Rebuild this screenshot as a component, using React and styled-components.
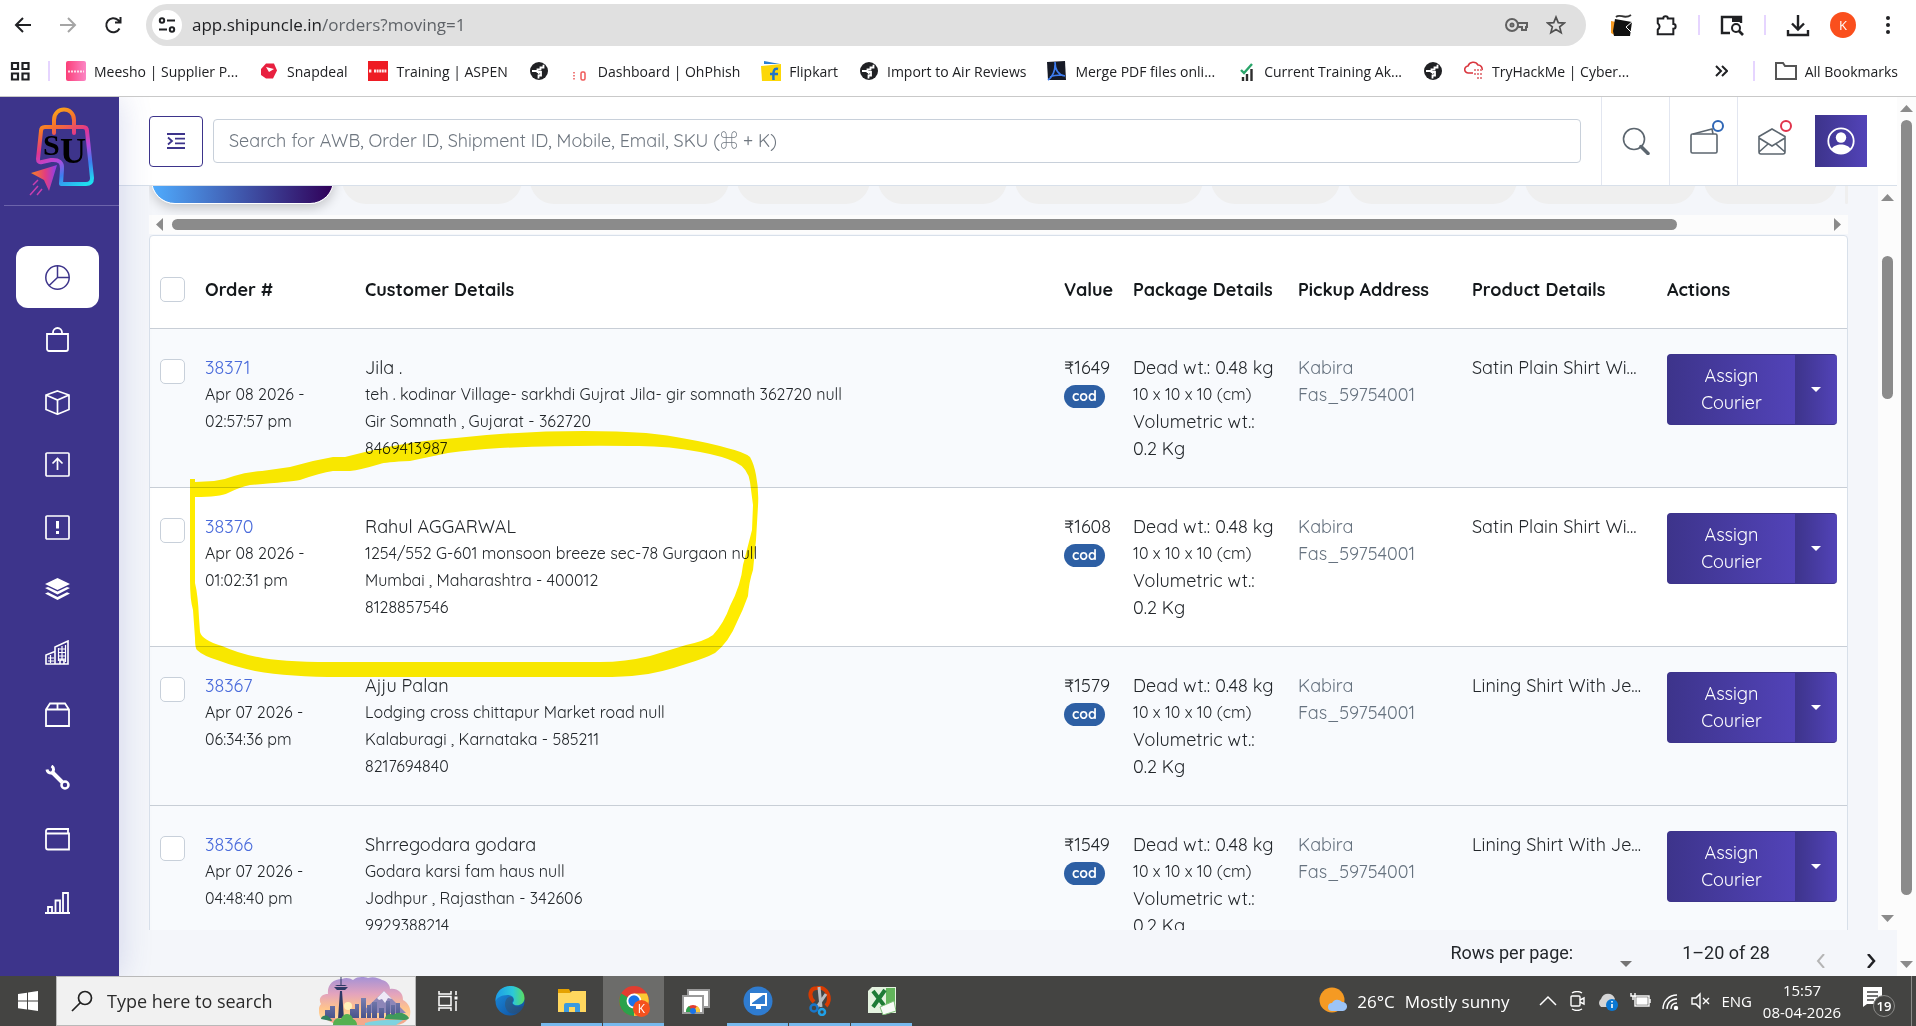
import React from "react";
import styled, { createGlobalStyle, css } from "styled-components";

const color = {
  brand: "#3d348b",
  brandLight: "#5243b8",
  line: "#d8e0ea",
  rowLine: "#c8ced6",
  page: "#f4f6fa",
  stripe: "#f8fafd",
  text: "#23272b",
  muted: "#66727f",
  thumb: "#8b8b8b",
};

const appFont = `Quicksand, Lato, "Noto Sans CJK JP", sans-serif`;
const systemFont = `"Segoe UI", "Open Sans", "Noto Sans", sans-serif`;

const GlobalStyle = createGlobalStyle`
  * { box-sizing: border-box; }
  body { margin: 0; overflow: hidden; font-family: ${appFont}; color: ${color.text}; }
  button, input, select { font: inherit; color: inherit; margin: 0; }
  button { padding: 0; border: 0; background: none; }
  a { color: inherit; text-decoration: none; }
  svg { display: block; flex: none; }
`;

const Screen = styled.div`
  position: relative;
  display: flex;
  flex-direction: column;
  height: 100vh;
  background: #fff;
`;

/* ---------- browser chrome ---------- */

const Chrome = styled.header`
  flex: none;
  border-bottom: 1px solid #c9c9c9;
  font-family: ${systemFont};
  color: #202124;
`;

const AddressRow = styled.div`
  display: flex;
  align-items: center;
  height: 50px;
  padding: 0 16px 0 11px;
`;

const NavGroup = styled.nav`
  display: flex;
  gap: 21px;
  width: 135px;
`;

const IconButton = styled.button`
  display: flex;
  align-items: center;
  justify-content: center;
  width: 24px;
  height: 24px;
`;

const AddressPill = styled.div`
  flex: 1;
  display: flex;
  align-items: center;
  height: 42px;
  padding: 0 18px 0 6px;
  border-radius: 21px;
  background: #e0e0e0;
`;

const SiteInfo = styled.button`
  display: flex;
  align-items: center;
  justify-content: center;
  width: 30px;
  height: 30px;
  border-radius: 50%;
  background: #fff;
`;

const UrlText = styled.div`
  flex: 1;
  padding-left: 10px;
  font-size: 17px;
  line-height: 24px;
  color: #5f6368;
  span { color: #202124; }
`;

const PillTools = styled.div`
  display: flex;
  gap: 16px;
`;

const ToolbarTools = styled.div`
  display: flex;
  align-items: center;
  gap: 20px;
  padding-left: 24px;
`;

const Divider = styled.span`
  width: 2px;
  height: 20px;
  background: #e6d5ff;
`;

const Profile = styled.button`
  width: 26px;
  height: 26px;
  border-radius: 50%;
  background: #fa4f1d;
  color: #fff;
  font-size: 13px;
`;

const BookmarkRow = styled.nav`
  display: flex;
  align-items: center;
  gap: 16px;
  height: 46px;
  padding: 0 18px 4px 8px;
  font-size: 14px;
`;

const BookmarkList = styled.div`
  flex: 1;
  display: flex;
  align-items: center;
  gap: 21px;
`;

const Bookmark = styled.a`
  display: flex;
  align-items: center;
  gap: 8px;
  white-space: nowrap;
`;

const BookmarkEnd = styled.div`
  display: flex;
  align-items: center;
  gap: 20px;
`;

/* ---------- application shell ---------- */

const Shell = styled.div`
  flex: 1;
  min-height: 0;
  display: flex;
`;

const Sidebar = styled.aside`
  position: relative;
  z-index: 1;
  flex: none;
  display: flex;
  flex-direction: column;
  width: 119px;
  background: ${color.brand};
  box-shadow: 0 0 32px rgba(61, 72, 170, 0.2);
  clip-path: inset(0 -40px 0 0);
`;

const Brand = styled.a`
  display: flex;
  justify-content: center;
  height: 109px;
  padding-top: 8px;
  margin-left: 4px;
  border-bottom: 1px solid #6c64ab;
`;

const SideNav = styled.nav`
  flex: 1;
  display: flex;
  flex-direction: column;
  justify-content: space-between;
  padding: 40px 20px 43px 16px;
`;

const SideLink = styled.a`
  display: flex;
  align-items: center;
  justify-content: center;
  height: 62px;
  border-radius: 12px;
  color: #fff;
  ${(p) => p.$active && css`background: #fff; color: ${color.brand};`}
`;

const Main = styled.main`
  flex: 1;
  min-width: 0;
  display: flex;
  flex-direction: column;
  background: ${color.page};
`;

const TopBar = styled.div`
  flex: none;
  display: flex;
  align-items: center;
  height: 89px;
  padding-left: 30px;
  border-bottom: 1px solid ${color.line};
  background: #fff;
`;

const MenuToggle = styled.button`
  display: flex;
  align-items: center;
  justify-content: center;
  width: 54px;
  height: 51px;
  border: 1px solid ${color.brand};
  border-radius: 4px;
  color: ${color.brand};
`;

const SearchInput = styled.input`
  flex: 1;
  height: 44px;
  margin: 0 20px 0 10px;
  padding: 0 15px 2px;
  border: 1px solid #c8d0da;
  border-radius: 4px;
  background: #fff;
  font-size: 18px;
  &::placeholder { color: #6f7780; opacity: 1; }
`;

const TopAction = styled.button`
  position: relative;
  display: flex;
  align-items: center;
  justify-content: center;
  width: 68px;
  height: 88px;
  border-left: 1px solid #e2e6f0;
  color: #5c666f;
`;

const Ring = styled.span`
  position: absolute;
  top: 23px;
  right: 13px;
  width: 12px;
  height: 12px;
  border: 2px solid ${(p) => p.$tone};
  border-radius: 50%;
`;

const AccountArea = styled.div`
  padding: 0 30px 0 10px;
`;

const Account = styled.button`
  display: flex;
  align-items: center;
  justify-content: center;
  width: 52px;
  height: 52px;
  background: linear-gradient(90deg, ${color.brand}, ${color.brandLight});
`;

const Scroller = styled.div`
  flex: 1;
  min-height: 0;
  display: flex;
`;

const Content = styled.div`
  flex: 1;
  min-width: 0;
  overflow: hidden;
  padding: 0 30px;
`;

const Tabs = styled.div`
  display: flex;
  align-items: flex-end;
  gap: 8px;
  height: 29px;
  padding: 0 0 11px 2px;
  overflow: hidden;
`;

const Tab = styled.button`
  flex: ${(p) => p.$span} ${(p) => p.$span} 0;
  height: 54px;
  border-radius: 24px;
  background: #efefef;
  ${(p) =>
    p.$active &&
    css`
      border: 1px solid #fff;
      background: linear-gradient(90deg, #4facfe, #300058);
      box-shadow: 0 4px 12px rgba(0, 0, 0, 0.2);
    `}
`;

const HTrack = styled.div`
  display: flex;
  align-items: center;
  height: 19px;
  padding: 0 7px;
  background: #fcfcfc;
`;

const HSpace = styled.div`
  flex: 1;
  padding: 0 157px 0 9px;
`;

const HThumb = styled.div`
  height: 11px;
  border-radius: 6px;
  background: ${color.thumb};
`;

const VTrack = styled.div`
  flex: none;
  display: flex;
  flex-direction: column;
  align-items: center;
  width: 19px;
  padding: 8px 0;
  background: #fcfcfc;
`;

const VSpace = styled.div`
  flex: 1;
  padding: ${(p) => p.$before}px 0 ${(p) => p.$after}px;
`;

const VThumb = styled.div`
  width: 11px;
  height: 100%;
  border-radius: 6px;
  background: ${color.thumb};
`;

/* ---------- orders table ---------- */

const Card = styled.div`
  margin-top: 1px;
  border: 1px solid ${color.line};
  border-radius: 4px;
  background: #fff;
`;

const Table = styled.table`
  width: 100%;
  table-layout: fixed;
  border-collapse: collapse;
  font-size: 18px;
  line-height: 27px;
`;

const Col = styled.col`
  width: ${(p) => (p.$w ? `${p.$w}px` : "auto")};
`;

const Th = styled.th`
  height: 92px;
  padding: 16px 10px 0;
  border-bottom: 1px solid ${color.rowLine};
  text-align: left;
  font-weight: 700;
  white-space: nowrap;
  color: #14181b;
`;

const Tr = styled.tr`
  background: ${(p) => (p.$striped ? color.stripe : "#fff")};
`;

const Td = styled.td`
  height: 159px;
  padding: 25px 10px;
  border-bottom: 1px solid ${color.rowLine};
  vertical-align: top;
  white-space: nowrap;
  ${(p) => p.$muted && css`color: ${color.muted};`}
`;

const Line = styled.div`
  height: 27px;
  font-size: ${(p) => (p.$small ? 16 : 18)}px;
`;

const Clip = styled.div`
  overflow: hidden;
  text-overflow: ellipsis;
`;

const OrderLink = styled.a`
  color: #4a6bdb;
`;

const Check = styled.input`
  appearance: none;
  display: block;
  width: 25px;
  height: 25px;
  border: 1px solid #c8d0da;
  border-radius: 5px;
  background: #fff;
`;

const CheckCell = styled(Td)`
  padding-top: 30px;
`;

const Pill = styled.span`
  display: inline-block;
  padding: 0 8px;
  border-radius: 12px;
  background: #2d5fa4;
  color: #fff;
  font-size: 14px;
  font-weight: 700;
  line-height: 23px;
`;

const Split = styled.div`
  display: flex;
  height: 71px;
  color: #fff;
`;

const SplitButton = styled.button`
  flex: 1;
  white-space: normal;
  padding: 0 16px;
  border: 1px solid ${color.brand};
  border-right: 0;
  border-radius: 4px 0 0 4px;
  background: linear-gradient(90deg, ${color.brand}, ${color.brandLight});
`;

const SplitMenu = styled(SplitButton)`
  flex: none;
  display: flex;
  align-items: center;
  justify-content: center;
  width: 42px;
  padding: 0;
  border-left: 0;
  border-radius: 0 4px 4px 0;
`;

const Pager = styled.div`
  flex: none;
  display: flex;
  align-items: center;
  justify-content: flex-end;
  height: 46px;
  padding: 0 14px 2px;
  font-family: Roboto, sans-serif;
  font-size: 18px;
`;

const RowsLabel = styled.label`
  display: flex;
  align-items: center;
  gap: 8px;
  margin-right: 44px;
`;

const RowsSelect = styled.select`
  appearance: none;
  width: 39px;
  height: 30px;
  border: 0;
  outline: 0;
  background: transparent;
`;

const SelectBox = styled.span`
  display: flex;
  align-items: flex-end;
  width: 57px;
  height: 30px;
`;

const PageButtons = styled.div`
  display: flex;
  align-items: flex-end;
  gap: 26px;
  height: 42px;
  margin-left: 39px;
`;

/* ---------- taskbar ---------- */

const Taskbar = styled.footer`
  flex: none;
  display: flex;
  height: 50px;
  background: #444442;
  color: #fff;
  font-family: ${systemFont};
`;

const TaskButton = styled.button`
  display: flex;
  align-items: center;
  justify-content: center;
  width: ${(p) => p.$w || 62}px;
  height: 50px;
`;

const TaskApp = styled(TaskButton)`
  width: 61px;
  border-bottom: 3px solid ${(p) => (p.$open ? "#76b9ed" : "transparent")};
  border-top: 3px solid transparent;
  ${(p) => p.$active && css`background: #6c6c6a; border-top-color: #6c6c6a;`}
`;

const TaskApps = styled.div`
  display: flex;
  gap: 1px;
`;

const TaskSearch = styled.label`
  display: flex;
  align-items: center;
  width: 360px;
  padding: 0 4px 0 14px;
  border: 1px solid #b9b9b9;
  background: #f1f1f1;
  input {
    flex: 1;
    min-width: 0;
    margin-left: 14px;
    padding: 0;
    border: 0;
    background: none;
    font-size: 18px;
  }
  input::placeholder { color: #2b2b2b; opacity: 1; }
`;

const Tray = styled.div`
  display: flex;
  align-items: center;
  margin-left: auto;
  padding-right: 4px;
`;

const Weather = styled.button`
  display: flex;
  align-items: center;
  gap: 10px;
  margin-right: 30px;
  font-size: 17px;
`;

const TrayIcons = styled.div`
  display: flex;
  align-items: center;
  gap: 10px;
  font-size: 15px;
`;

const Clock = styled.time`
  width: 92px;
  margin: 0 14px 0 4px;
  text-align: center;
  font-size: 15px;
  line-height: 22px;
`;

const Notice = styled.button`
  display: flex;
  align-items: center;
  width: 50px;
  height: 50px;
  border-right: 1px solid #8a8a88;
`;

/* freehand highlighter drawn over the page */
const Marker = styled.svg`
  position: absolute;
  left: 190px;
  top: 430px;
  z-index: 2;
  mix-blend-mode: multiply;
  pointer-events: none;
`;

/* ---------- drawings ---------- */

const Ico = ({ s = 24, vb = 24, w = 2, children }) => (
  <svg width={s} height={s} viewBox={`0 0 ${vb} ${vb}`} fill="none" stroke="currentColor" strokeWidth={w} aria-hidden="true">
    {children}
  </svg>
);

const Globe = () => (
  <Ico s={20} vb={20} w={2}>
    <circle cx="10" cy="10" r="9" fill="#202124" stroke="none" />
    <path d="M3 10h4.500c2 0 1.500 2.500 3 2.500M9.500 17.500v-3h2.500v-3.500H8.500V8.500h3V6.500h3V3.800" stroke="#fff" strokeWidth="1.800" />
  </Ico>
);

const favicons = {
  meesho: (
    <Ico s={20} vb={20}>
      <defs><linearGradient id="me"><stop stopColor="#fb3f78" /><stop offset="1" stopColor="#fb86c5" /></linearGradient></defs>
      <rect width="20" height="20" rx="2" fill="url(#me)" stroke="none" />
      <path d="M2 10.500h16" stroke="#fff" strokeWidth="2" strokeDasharray="2 1" opacity=".8" />
    </Ico>
  ),
  snapdeal: (
    <Ico s={20} vb={20}>
      <path d="M7 2.500h8l3 7-4 8H7L2 14V8z" fill="#e8203f" stroke="none" />
      <path d="M7 6l3 5 5-3-4-1z" fill="#fff" stroke="none" />
    </Ico>
  ),
  aspen: (
    <Ico s={20} vb={20}>
      <rect width="20" height="20" fill="#ee1c24" stroke="none" />
      <path d="M1 10h3M6 10h13" stroke="#fff" strokeWidth="3" strokeDasharray="2 .600" opacity=".9" />
    </Ico>
  ),
  phish: (
    <Ico s={20} vb={20}>
      <path d="M4 11v8" stroke="#f08080" strokeDasharray="1.500 1.500" />
      <rect x="11" y="11" width="4" height="8" rx="1.500" stroke="#f05a5a" strokeWidth="1.500" />
    </Ico>
  ),
  flipkart: (
    <Ico s={20} vb={20}>
      <path d="M3 0l16 3H3z" fill="#2a7fd4" stroke="none" />
      <path d="M0 5l20-2v17H1z" fill="#fcd708" stroke="none" />
      <path d="M17 8c-4-1-5 1-4.500 11M9 13h8" stroke="#1f74c8" strokeWidth="2.500" />
    </Ico>
  ),
  pdf: (
    <Ico s={20} vb={20}>
      <path d="M0 1l18-1 1 19H1z" fill="#161a26" stroke="none" />
      <path d="M8 1c0 9 4 13 10 14M8 4c0 8-3 12-7 15M3 16c4-2 8-2 12-2" stroke="#3f7df0" strokeWidth="1.600" />
    </Ico>
  ),
  check: (
    <Ico s={20} vb={20}>
      <path d="M7 20v-4M11 20v-7M15.500 20V8" stroke="#2d2d2d" strokeWidth="2.400" />
      <path d="M5 9l3 3 8-9" stroke="#2aa56a" strokeWidth="2.400" />
    </Ico>
  ),
  thm: (
    <Ico s={20} vb={20}>
      <path d="M9 12H4.500a3.500 3.500 0 01-.5-7 5.500 5.500 0 0110-1 4 4 0 014 5" stroke="#d9363e" strokeWidth="1.600" />
      <path d="M10 9h9M10 13h9M13 17h6" stroke="#e5868b" strokeDasharray="2 1" />
    </Ico>
  ),
};

const bookmarks = [
  { icon: favicons.meesho, text: "Meesho | Supplier P..." },
  { icon: favicons.snapdeal, text: "Snapdeal" },
  { icon: favicons.aspen, text: "Training | ASPEN" },
  { icon: <Globe />, name: "Untitled page" },
  { icon: favicons.phish, text: "Dashboard | OhPhish" },
  { icon: favicons.flipkart, text: "Flipkart" },
  { icon: <Globe />, text: "Import to Air Reviews" },
  { icon: favicons.pdf, text: "Merge PDF files onli..." },
  { icon: favicons.check, text: "Current Training Ak..." },
  { icon: <Globe />, name: "Untitled page" },
  { icon: favicons.thm, text: "TryHackMe | Cyber..." },
];

const side = (label, body, active) => ({ label, body, active });

const sideItems = [
  side("Dashboard", <Ico s={25} vb={25} w={1.5}><circle cx="12.500" cy="12.500" r="11.700" /><path d="M12.500 1v11.500H24M12.500 12.500l-8.300 8" /></Ico>, true),
  side("Orders", <Ico s={25} vb={25} w={1.8}><path d="M2 7h21v15a2 2 0 01-2 2H4a2 2 0 01-2-2zM8 7V5.500a4.500 4.500 0 019 0V7" /></Ico>),
  side("Shipments", <Ico s={25} vb={25} w={1.7}><path d="M12.500 1L24 5v14.500l-11.500 4.700L1 19.500V5zM1 5l11.500 5L24 5M12.500 10v14" /></Ico>),
  side("Upload", <Ico s={25} vb={25} w={1.7}><rect x="1" y="1" width="23" height="23" rx="1" /><path d="M12.500 18V7M7.500 11.500l5-5 5 5" /></Ico>),
  side("Exceptions", <Ico s={25} vb={25} w={1.7}><rect x="1" y="1" width="23" height="23" rx="1" /><path d="M12.500 6v7.500M12.500 16v3" strokeWidth="3" /></Ico>),
  side("Channels", <Ico s={25} vb={25} w={1}><path d="M12.500 1L25 7l-12.500 6L0 7zM0 11l3-1 9.500 4.500L22 10l3 1-12.500 6.500zM0 16.500l3-1.200 9.500 4.700 9.500-4.700 3 1.200-12.500 6.500z" fill="currentColor" stroke="none" /></Ico>),
  side("Warehouses", <Ico s={25} vb={25} w={1.6}><path d="M1 24V15l9-3.500V7l13-6v23zM10 11v13" /><path d="M13 9h8M13 12.500h8M13 16h8M13 19h8M3 18h6M3 21h6M13.500 8v13M17 6v14M20.500 5v17M5.500 15v8" strokeWidth="1.200" /><path d="M15 24v-4h4v4" /></Ico>),
  side("Products", <Ico s={25} vb={25} w={1.8}><path d="M1 7.500L5 1.500h15l4 6V24H1zM1 7.500h23M12.500 1.500v6" /></Ico>),
  side("Tools", <Ico s={25} vb={25} w={4}><path d="M7 7l10 10" /><circle cx="20" cy="20" r="3.500" strokeWidth="2.500" /><path d="M2 4.500a4 4 0 004.500 3.500A4 4 0 006.500 1" strokeWidth="3" /></Ico>),
  side("Wallet", <Ico s={25} vb={25} w={1.8}><path d="M24 2H3a2 2 0 00-2 2v16.500a2 2 0 002 2h21V6.500H1M23 2v4" /></Ico>),
  side("Reports", <Ico s={25} vb={25} w={1.8}><path d="M0 23h25M3 23v-6h4v6M10.500 23V10.500h4.500V23M18 23V3h5v20" /></Ico>),
];

const Logo = () => (
  <svg width="66" height="92" viewBox="0 0 66 92" aria-label="SU">
    <defs>
      <linearGradient id="bag" gradientUnits="userSpaceOnUse" x1="14" y1="6" x2="52" y2="82">
        <stop stopColor="#fbb315" /><stop offset=".22" stopColor="#f6722c" /><stop offset=".42" stopColor="#e0358f" /><stop offset=".6" stopColor="#b548dc" /><stop offset=".78" stopColor="#3d7df0" /><stop offset="1" stopColor="#1ee0f0" />
      </linearGradient>
      <linearGradient id="dart"><stop stopColor="#f58220" /><stop offset=".55" stopColor="#e23d80" /><stop offset="1" stopColor="#8b3df0" /></linearGradient>
    </defs>
    <g fill="none" stroke="url(#bag)" strokeWidth="4" strokeLinejoin="round" strokeLinecap="round">
      <path d="M25 28V15c0-14 20-14 20 0v13" />
      <path d="M32 79h25q6 0 6-6L58 26q0-4-4-4H16q-4 0-4 4L9 54q0 4 4 3l9-2q12-1 11 9z" />
    </g>
    <path d="M2 68l26-8-8 26-5-11z" fill="url(#dart)" />
    <path d="M1 90l8-9M8 90l5-6M4 80l5-5" stroke="#c93fb0" strokeWidth="1.500" />
    <text x="14" y="50" fontFamily="Liberation Serif, serif" fontWeight="700" fontSize="30">S</text>
    <text x="31" y="58" fontFamily="Liberation Serif, serif" fontWeight="700" fontSize="36">U</text>
  </svg>
);

const Tri = ({ dir }) => {
  const d = { up: "M0 7l6.500-7L13 7z", down: "M0 0h13L6.500 7z", left: "M7 0v13L0 6.500z", right: "M0 0v13l7-6.500z" }[dir];
  const tall = dir === "left" || dir === "right";
  return <svg width={tall ? 7 : 13} height={tall ? 13 : 7} fill={color.thumb}><path d={d} /></svg>;
};

const Skyline = () => (
  <svg width="92" height="48" viewBox="0 0 92 48">
    <defs>
      <linearGradient id="sky" x2="0" y2="1"><stop stopColor="#a592d6" /><stop offset=".4" stopColor="#e3a3bd" /><stop offset=".75" stopColor="#ffc48c" /><stop offset="1" stopColor="#ffd9a0" /></linearGradient>
      <linearGradient id="tower" x2="0" y2="1"><stop stopColor="#7a7fb0" /><stop offset="1" stopColor="#46518a" /></linearGradient>
    </defs>
    <path d="M2 42C-1 36-1 30 2 27-1 22 2 17 9 17 8 8 14 2 23 2c4-2 8-1 11 1C39-1 45 0 49 1c5-2 11 0 14 2 5 1 8 5 8 9 7-1 13 3 13 11 7 4 9 11 6 19z" fill="url(#sky)" />
    <circle cx="29" cy="29" r="4" fill="#fff0b8" />
    <path d="M42 36l23-22 22 22z" fill="#8d86b8" />
    <path d="M58 21l7-7 8 8-4-1-3 5-3-4-3 1z" fill="#efeaf7" />
    <path d="M6 33h5v-4h5v13H6zM31 32h5v10h-5zM36 27h4v15h-4zM42 21h5v21h-5zM48 28h4v14h-4zM53 25h5v17h-5zM60 31h5v11h-5zM67 24h4v18h-4zM72 28h4v14h-4zM77 26h4v12h-4z" fill="url(#tower)" />
    <path d="M21 14h2l2 28h-6zM15 10h14l-3 3h-8zM18 8h8l2 1H16z" fill="#2f3a66" />
    <path d="M22 0v9" stroke="#2f3a66" />
    <path d="M4 41h85q-3 7-13 7H18z" fill="#f3a98c" />
    <path d="M46 46q16-4 38-3l-7 5H46z" fill="#7fd3e0" />
    <path d="M66 42c0-5 6-6 8-4 5-4 13-2 16 3-1 2-4 2-6 2z" fill="#3f9a5a" />
    <path d="M14 48c0-6 5-8 8-6 3-8 11-5 12 0 3 1 4 4 4 6z" fill="#55b050" />
    <path d="M2 42c0-3 5-5 8-2s4 4 2 4z" fill="#2f8060" />
  </svg>
);

const ChromeMark = ({ s = 28, badge }) => (
  <svg width={s} height={s} viewBox="0 0 30 30">
    <circle cx="15" cy="15" r="14" fill="#e23d30" />
    <path d="M15 15L3 8a14 14 0 0012 21z" fill="#2ba24c" /><path d="M15 15v14a14 14 0 0012-21H15z" fill="#fcc934" />
    <circle cx="15" cy="15" r="7" fill="#fff" /><circle cx="15" cy="15" r="5.300" fill="#1a73e8" />
    {badge && <><circle cx="22" cy="22" r="8" fill="#f4511e" /><text x="22" y="26" fontSize="11" textAnchor="middle" fill="#fff">K</text></>}
  </svg>
);

const apps = [
  { name: "Edge", icon: (
    <svg width="30" height="30" viewBox="0 0 30 30">
      <defs>
        <linearGradient id="ed"><stop stopColor="#1c9be8" /><stop offset=".6" stopColor="#2cc8d8" /><stop offset="1" stopColor="#5ade62" /></linearGradient>
        <linearGradient id="ed2" x2="1" y2="1"><stop stopColor="#1b8fe0" /><stop offset="1" stopColor="#0f4b9a" /></linearGradient>
      </defs>
      <circle cx="15" cy="15" r="14.500" fill="url(#ed2)" />
      <path d="M.5 15C.5-5 29.500-4 29.500 12c0 8-10 9-12 5 3-3 1-8-5-8C6 9 2 12 .5 15z" fill="url(#ed)" />
      <path d="M30 19c-4 3-13 2-13-3 3-3 0-6-3-5-5 2-6 12 1 16 5 2 12 0 15-8z" fill="#444442" opacity=".35" />
    </svg>) },
  { name: "File Explorer", open: true, icon: (
    <svg width="30" height="28" viewBox="0 0 30 28"><path d="M1 2h11l2 4H1z" fill="#e5a100" /><path d="M1 6h12l2-2h14v21H1z" fill="#ffd75e" /><path d="M7 25v-7q0-2 2-2h12q2 0 2 2v7h-5v-5h-6v5z" fill="#3a9ae0" /></svg>) },
  { name: "Chrome", open: true, active: true, icon: <ChromeMark s={32} badge /> },
  { name: "Remote Desktop", icon: (
    <svg width="28" height="28" viewBox="0 0 28 28"><rect x="6" y="3" width="21" height="17" fill="#fff" stroke="#9a9a9a" strokeWidth="2" /><rect x="1" y="9" width="20" height="17" fill="#fff" stroke="#9a9a9a" strokeWidth="2" /><path d="M4 25a7 7 0 0114 0z" fill="#e23d30" /><path d="M4 25a7 7 0 013-6l4 6z" fill="#2ba24c" /><path d="M18 25a7 7 0 00-3-6l-4 6z" fill="#fcc934" /><circle cx="11" cy="24" r="3" fill="#1a73e8" /></svg>) },
  { name: "Presenter", open: true, icon: (
    <svg width="30" height="30" viewBox="0 0 30 30"><circle cx="15" cy="15" r="14.500" fill="#2f7cd0" /><rect x="8" y="8" width="15" height="11" fill="#2f7cd0" stroke="#fff" strokeWidth="2" /><path d="M9 17l11-8H9zM13 20h5v3h-5z" fill="#fff" /></svg>) },
  { name: "Snipping Tool", open: true, icon: (
    <svg width="28" height="30" viewBox="0 0 28 30" fill="none"><path d="M8 16C2 10 4 2 11 2c11-2 15 12 9 18" stroke="#d83b01" strokeWidth="4" /><path d="M13 1l2 20M20 8l-9 13" stroke="#b8bcc0" strokeWidth="3" /><circle cx="8" cy="22" r="3.500" stroke="#1976c9" strokeWidth="2.500" /><circle cx="16" cy="26" r="3" stroke="#1fa0e8" strokeWidth="2.500" /></svg>) },
  { name: "Excel", open: true, icon: (
    <svg width="28" height="28" viewBox="0 0 28 28"><path d="M4 0h24v26H0V4z" fill="#e4f2df" /><path d="M18 1h9v16h-9z" fill="#62b45b" /><path d="M5 4l13 17M17 3L5 20" stroke="#1e7b36" strokeWidth="4" /><path d="M12 20l14-6 2 10-13 4z" fill="#f8fbf7" stroke="#7fbf7a" /></svg>) },
];

/* ---------- data ---------- */

const orders = [
  { id: "38371", date: "Apr 08 2026 -", time: "02:57:57 pm", customer: ["Jila .", "teh . kodinar Village- sarkhdi Gujrat Jila- gir somnath 362720 null", "Gir Somnath , Gujarat - 362720", "8469413987"], value: "₹1649", product: "Satin Plain Shirt Wi...", striped: true },
  { id: "38370", date: "Apr 08 2026 -", time: "01:02:31 pm", customer: ["Rahul AGGARWAL", "1254/552 G-601 monsoon breeze sec-78 Gurgaon null", "Mumbai , Maharashtra - 400012", "8128857546"], value: "₹1608", product: "Satin Plain Shirt Wi..." },
  { id: "38367", date: "Apr 07 2026 -", time: "06:34:36 pm", customer: ["Ajju Palan", "Lodging cross chittapur Market road null", "Kalaburagi , Karnataka - 585211", "8217694840"], value: "₹1579", product: "Lining Shirt With Je...", striped: true },
  { id: "38366", date: "Apr 07 2026 -", time: "04:48:40 pm", customer: ["Shrregodara godara", "Godara karsi fam haus null", "Jodhpur , Rajasthan - 342606", "9929388214"], value: "₹1549", product: "Lining Shirt With Je...", striped: true },
];

const columns = [
  { w: 45 },
  { title: "Order #", w: 160 },
  { title: "Customer Details" },
  { title: "Value", w: 69 },
  { title: "Package Details", w: 165 },
  { title: "Pickup Address", w: 174 },
  { title: "Product Details", w: 195 },
  { title: "Actions", w: 190 },
];

const tabSpans = [181, 180, 199, 133, 129, 188, 129, 169, 171, 133, 3];

const OrderRow = ({ order }) => (
  <Tr $striped={order.striped}>
    <CheckCell><Check type="checkbox" aria-label={`Select order ${order.id}`} /></CheckCell>
    <Td>
      <Line><OrderLink href="#order">{order.id}</OrderLink></Line>
      <Line $small>{order.date}</Line>
      <Line $small>{order.time}</Line>
    </Td>
    <Td>{order.customer.map((t, i) => <Line key={t} $small={i > 0}>{t}</Line>)}</Td>
    <Td><Line>{order.value}</Line><Line><Pill>cod</Pill></Line></Td>
    <Td>
      <Line>Dead wt.: 0.48 kg</Line>
      <Line $small>10 x 10 x 10 (cm)</Line>
      <Line>Volumetric wt.:</Line>
      <Line>0.2 Kg</Line>
    </Td>
    <Td $muted><Line>Kabira</Line><Line>Fas_59754001</Line></Td>
    <Td><Clip>{order.product}</Clip></Td>
    <Td>
      <Split>
        <SplitButton type="button">Assign Courier</SplitButton>
        <SplitMenu type="button" aria-label="More actions">
          <svg width="10" height="5" fill="#fff"><path d="M0 0h10L5 5z" /></svg>
        </SplitMenu>
      </Split>
    </Td>
  </Tr>
);

const BrowserChrome = () => (
  <Chrome>
    <AddressRow>
      <NavGroup aria-label="History">
        <IconButton aria-label="Back"><Ico s={20} vb={20}><path d="M18 10H3M10 3l-7 7 7 7" /></Ico></IconButton>
        <IconButton aria-label="Forward"><Ico s={20} vb={20}><path d="M2 10h15M10 3l7 7-7 7" stroke="#a5a5a5" /></Ico></IconButton>
        <IconButton aria-label="Reload"><Ico s={20} vb={20}><path d="M16.500 13.500A7 7 0 1115 5l2 2M17.500 2v5.500H12" /></Ico></IconButton>
      </NavGroup>
      <AddressPill>
        <SiteInfo aria-label="Site information">
          <Ico s={18} vb={18}><circle cx="4" cy="4.500" r="2.200" /><path d="M9 4.500h8M1 13.500h8" /><circle cx="14" cy="13.500" r="2.200" /></Ico>
        </SiteInfo>
        <UrlText><span>app.shipuncle.in</span>/orders?moving=1</UrlText>
        <PillTools>
          <IconButton aria-label="Passwords"><Ico s={24}><g stroke="#606060"><circle cx="8" cy="12" r="6" /><circle cx="8" cy="12" r="1.500" /><path d="M13 10h10v4h-1v3h-4v-3h-5" /></g></Ico></IconButton>
          <IconButton aria-label="Bookmark this page"><Ico s={20}><path d="M12 2.500l2.700 6.700 7.200.5-5.500 4.600 1.800 7-6.200-3.800-6.200 3.800 1.800-7L2.100 9.700l7.200-.5z" stroke="#505050" /></Ico></IconButton>
        </PillTools>
      </AddressPill>
      <ToolbarTools>
        <IconButton aria-label="Extension"><Ico s={24}><path d="M1 8v12l5 3V9z" fill="#f59a23" stroke="none" /><path d="M5 6l17 3-2 14H4l-1-5z" fill="#111" stroke="none" /><path d="M6 4c4-4 8 3 15-2" stroke="#333" strokeWidth="1.800" /><path d="M23 8l-7 6 8 8" stroke="#fff" strokeWidth="1" /></Ico></IconButton>
        <IconButton aria-label="Extensions"><Ico s={22} w={2.2}><path d="M3 5h6a2.500 2.500 0 015 0h6v6a2.500 2.500 0 010 5v6H3v-5q4-3.500 0-7z" /></Ico></IconButton>
        <Divider />
        <IconButton aria-label="Side panel search"><Ico s={24}><path d="M10 20H2V4h19v6" strokeWidth="2.400" /><path d="M12 3h9v6h-9z" fill="currentColor" stroke="none" /><circle cx="16" cy="15" r="4" /><path d="M19 18l4 4" strokeWidth="2.600" /></Ico></IconButton>
        <Divider />
        <IconButton aria-label="Downloads"><Ico s={24} w={2.4}><path d="M12 2v14M6 10.500l6 6 6-6M2 17v5h20v-5" /></Ico></IconButton>
        <Profile aria-label="Profile K">K</Profile>
        <IconButton aria-label="Menu"><svg width="6" height="20" fill="#202124"><circle cx="3" cy="3" r="2" /><circle cx="3" cy="10" r="2" /><circle cx="3" cy="17" r="2" /></svg></IconButton>
      </ToolbarTools>
    </AddressRow>
    <BookmarkRow aria-label="Bookmarks">
      <IconButton aria-label="Apps"><Ico s={20} vb={20} w={2.2}><path d="M2 2h6v6H2zM12.500 2h6v6h-6zM2 12.500h6v6H2zM12.500 12.500h6v6h-6z" /></Ico></IconButton>
      <Divider />
      <BookmarkList>
        {bookmarks.map((b, i) => <Bookmark key={i} href="#bookmark" aria-label={b.name}>{b.icon}{b.text}</Bookmark>)}
      </BookmarkList>
      <BookmarkEnd>
        <IconButton aria-label="More bookmarks"><Ico s={14} vb={14}><path d="M2 2l5 5-5 5M8 2l5 5-5 5" /></Ico></IconButton>
        <Divider />
        <Bookmark href="#all"><Ico s={22} vb={22}><path d="M1 3h7l2 3h11v13H1z" stroke="#555" /></Ico>All Bookmarks</Bookmark>
      </BookmarkEnd>
    </BookmarkRow>
  </Chrome>
);

const DesktopTaskbar = () => (
  <Taskbar>
    <TaskButton $w={56} aria-label="Start"><svg width="20" height="20" fill="#fff"><path d="M0 3l9-1.300V9.500H0zM10 1.500L20 0v9.500H10zM0 10.500h9v8L0 17.300zM10 10.500h10V20l-10-1.500z" /></svg></TaskButton>
    <TaskSearch>
      <svg width="22" height="22" viewBox="0 0 22 22" fill="none" stroke="#222" strokeWidth="1.700"><circle cx="14" cy="8" r="6.500" /><path d="M9.500 12.500L1 21" /></svg>
      <input type="text" placeholder="Type here to search" aria-label="Type here to search" />
      <Skyline />
    </TaskSearch>
    <TaskButton $w={63} aria-label="Task View"><Ico s={20} vb={20} w={1.5}><path d="M1 0v3h12V0M1 20v-3h12v3M1 5.500h12v9H1zM18 0v4M18 10v10" /><path d="M16.500 5.500h3v3h-3z" fill="#fff" stroke="none" /></Ico></TaskButton>
    <TaskApps>
      {apps.map((a) => <TaskApp key={a.name} aria-label={a.name} $open={a.open} $active={a.active}>{a.icon}</TaskApp>)}
    </TaskApps>
    <Tray>
      <Weather>
        <svg width="28" height="28" viewBox="0 0 28 28"><circle cx="13" cy="13" r="12.500" fill="#f59a23" /><path d="M13 24a4 4 0 010-8 6 6 0 0110-1 4.500 4.500 0 011 9z" fill="#9cc4f7" /></svg>
        <span>26°C</span><span>Mostly sunny</span>
      </Weather>
      <TrayIcons>
        <Ico s={18} vb={18} w={1.5}><path d="M1 13l8-8 8 8" /></Ico>
        <Ico s={20} vb={20} w={1.4}><rect x="4" y="5" width="9" height="10" rx="1" /><path d="M13 9l4-2v6l-4-2M5 2q5-3 10 0M5 18q5 3 10 0" /></Ico>
        <svg width="22" height="20" viewBox="0 0 22 20"><path d="M4 16a5 5 0 010-8c2-7 12-7 14 0l-6 8z" fill="#d5d5d5" /><circle cx="15" cy="14" r="6" fill="#0a78d4" /><path d="M15 10v1.500M15 13v4" stroke="#fff" strokeWidth="1.600" /></svg>
        <Ico s={22} vb={22} w={1.4}><rect x="6" y="6" width="14" height="10" /><path d="M8 8h10v6H8z" fill="#fff" /><path d="M21 9v4M2 3v3h4V3M4 6v4" /></Ico>
        <Ico s={18} vb={18} w={1.4}><path d="M2 17C2 9 8 3 16 3M6 17c0-6 4-10 10-10M10 17c0-4 2-6 6-6" /><circle cx="15" cy="16" r="1.500" fill="#fff" /></Ico>
        <Ico s={22} vb={22} w={1.4}><path d="M3 8h4l4-4v14l-4-4H3zM14 8l6 6M20 8l-6 6" /></Ico>
        <span>ENG</span>
      </TrayIcons>
      <Clock>15:57<br />08-04-2026</Clock>
      <Notice aria-label="19 notifications">
        <svg width="34" height="34" viewBox="0 0 34 34"><path d="M1 3h19v17H5l-4 3z" fill="#fff" /><path d="M5 8h11M5 12h11M5 16h7" stroke="#444" strokeWidth="1.500" /><circle cx="22" cy="22" r="10.500" fill="#444442" stroke="#8a8a88" /><text x="22" y="27" fontSize="13" fontWeight="600" textAnchor="middle" fill="#fff">19</text></svg>
      </Notice>
    </Tray>
  </Taskbar>
);

export default function App() {
  return (
    <Screen>
      <GlobalStyle />
      <BrowserChrome />
      <Shell>
        <Sidebar>
          <Brand href="#home" aria-label="Home"><Logo /></Brand>
          <SideNav aria-label="Main">
            {sideItems.map((s) => <SideLink key={s.label} href="#nav" aria-label={s.label} $active={s.active}>{s.body}</SideLink>)}
          </SideNav>
        </Sidebar>
        <Main>
          <TopBar>
            <MenuToggle aria-label="Toggle menu"><Ico s={18} vb={18} w={1.8}><path d="M0 2h18M8 6.700h10M8 11.300h10M0 16h18M1 5.500L5 9l-4 3.500" /></Ico></MenuToggle>
            <SearchInput type="search" aria-label="Search orders" placeholder="Search for AWB, Order ID, Shipment ID, Mobile, Email, SKU (⌘ + K)" />
            <TopAction aria-label="Search"><Ico s={28} vb={28} w={1.6}><circle cx="12" cy="12" r="10.500" /><path d="M19 19.500l7 7" strokeWidth="3.500" strokeLinecap="round" /></Ico></TopAction>
            <TopAction aria-label="Wallet"><Ico s={28} vb={28} w={1.6}><rect x="1" y="7" width="26" height="19" rx="1.500" /><path d="M3 7l19-5 1 5" /></Ico><Ring $tone="#2f66b5" /></TopAction>
            <TopAction aria-label="Messages"><Ico s={28} vb={28} w={1.6}><path d="M1 9.500L14 2l13 7.500V25q0 2-2 2H3q-2 0-2-2zM1 11l13 8 13-8M1 25l9-8M27 25l-9-8" /></Ico><Ring $tone="#e0344c" /></TopAction>
            <AccountArea>
              <Account aria-label="Account"><svg width="28" height="28" viewBox="0 0 28 28"><circle cx="14" cy="14" r="12.700" fill="none" stroke="#fff" strokeWidth="1.800" /><circle cx="14" cy="10.500" r="5.200" fill="#fff" /><path d="M4.500 22c3-6 16-6 19 0a12 12 0 01-19 0z" fill="#fff" /></svg></Account>
            </AccountArea>
          </TopBar>
          <Scroller>
            <Content>
              <Tabs>{tabSpans.map((n, i) => <Tab key={i} $span={n} $active={i === 0} aria-label={`Tab ${i + 1}`} />)}</Tabs>
              <HTrack><Tri dir="left" /><HSpace><HThumb /></HSpace><Tri dir="right" /></HTrack>
              <Card>
                <Table>
                  <colgroup>{columns.map((c, i) => <Col key={i} $w={c.w} />)}</colgroup>
                  <thead>
                    <tr>{columns.map((c, i) => <Th key={i} scope="col">{c.title || <Check type="checkbox" aria-label="Select all orders" />}</Th>)}</tr>
                  </thead>
                  <tbody>{orders.map((o) => <OrderRow key={o.id} order={o} />)}</tbody>
                </Table>
              </Card>
            </Content>
            <VTrack><Tri dir="up" /><VSpace $before={55} $after={516}><VThumb /></VSpace><Tri dir="down" /></VTrack>
          </Scroller>
          <Pager>
            <RowsLabel>Rows per page:
              <SelectBox><RowsSelect defaultValue=""><option value="" /></RowsSelect><svg width="12" height="6" fill="#747474"><path d="M0 0h12L6 6z" /></svg></SelectBox>
            </RowsLabel>
            <span>1–20 of 28</span>
            <PageButtons>
              <IconButton aria-label="Previous page"><Ico s={14} vb={14}><path d="M10 0L4 7l6 7" stroke="#b5b5b5" /></Ico></IconButton>
              <IconButton aria-label="Next page"><Ico s={14} vb={14} w={2.5}><path d="M4 0l6 7-6 7" stroke="#202124" /></Ico></IconButton>
            </PageButtons>
          </Pager>
        </Main>
        <VTrack><Tri dir="up" /><VSpace $before={8} $after={66}><VThumb /></VSpace><Tri dir="down" /></VTrack>
      </Shell>
      <DesktopTaskbar />
      <Marker width="570" height="250" viewBox="190 430 570 250">
        <path
          fill="#ffec00"
          fillRule="evenodd"
          d="M190 479L195 479L195 482L214 481Q224 480 234 476Q246 472 262 471L290 467L313 461L333 457L345 457L365 452Q410 441 456 438Q520 431 584 431Q618 431 646 433Q668 435 687 439Q710 443 727 448Q744 452 750 457Q754 464 756 475Q759 490 758 506L756 540L753 570Q749 582 748 596Q743 610 737 622Q729 642 715 653Q706 658 686 664Q660 673 640 675Q625 677 600 677L340 677Q290 677 255 671Q233 666 220 661Q203 656 197 650Q195 648 195 638L193 610Q190 600 190 580ZM195 497L195 583Q198 595 199 618L200 632Q202 640 222 646Q240 654 258 657Q280 662 330 662L600 662Q625 662 650 656Q670 650 686 645Q705 641 713 635Q724 623 730 606Q741 585 743 565L752 530L753 505L750 482Q748 468 735 462Q722 456 700 452Q665 445 630 446Q570 445 500 448Q470 450 448 453L410 461Q385 462 380 464Q360 470 350 471L333 471Q320 473 300 480Q290 482 250 485Q240 487 228 493Q220 497 195 497Z"
        />
      </Marker>
    </Screen>
  );
}
